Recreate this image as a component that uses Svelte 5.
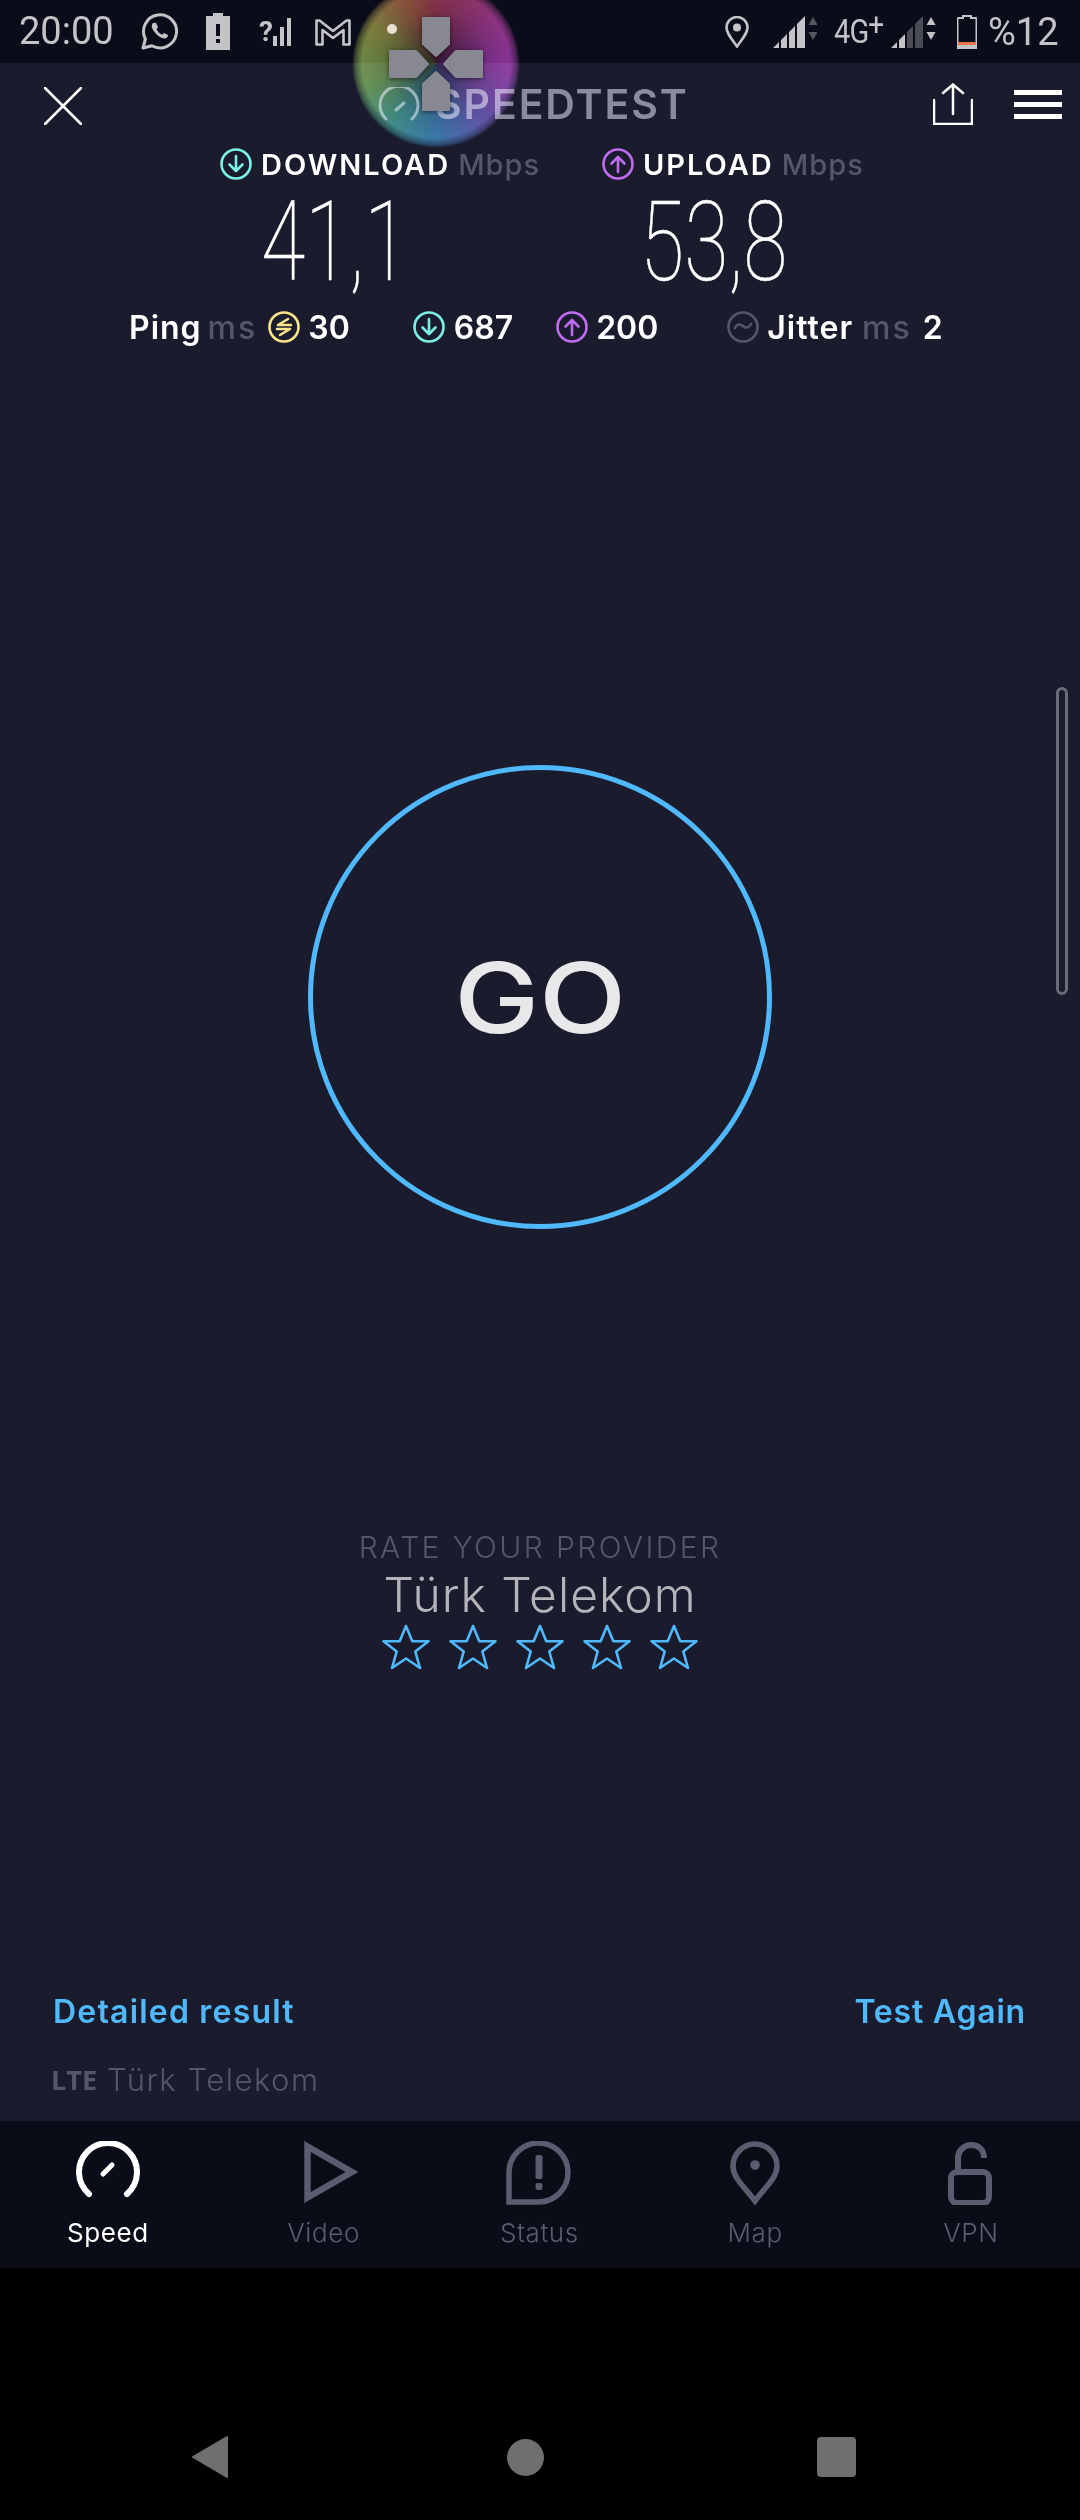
<script>
	const stars = [1, 2, 3, 4, 5];
	const tabs = [
		{ label: 'Speed', active: true },
		{ label: 'Video' },
		{ label: 'Status' },
		{ label: 'Map' },
		{ label: 'VPN' }
	];
</script>

<div class="phone">
	<div class="status">
		<div class="status-left">
			<span class="clock">20:00</span>
			<svg class="ic-wa" viewBox="0 0 37 37" width="37" height="37">
				<path d="M2 35l2.400-9A16.500 16.500 0 1 1 11 32.800z" fill="none" stroke="#c4c4c8" stroke-width="3" stroke-linejoin="round" />
				<path d="M12 10c-2 2-1.500 5 1.500 9s7 6.500 10 6.500c2.500 0 3.500-2 3.500-3.500l-4-2-1.800 1.800c-2.500-1-4.700-3.200-5.700-5.700l1.500-1.800-2-4.500z" fill="#c4c4c8" />
			</svg>
			<svg class="ic-bat" viewBox="0 0 24 37" width="24" height="37">
				<path d="M7 0h10v3h7v34H0V3h7z" fill="#c4c4c8" />
				<rect x="10" y="11" width="4" height="12" fill="#0a0c1a" />
				<rect x="10" y="26" width="4" height="4" fill="#0a0c1a" />
			</svg>
			<span class="qsig">
				<span class="q">?</span>
				<svg viewBox="0 0 20 28" width="20" height="28">
					<rect x="0" y="18" width="4" height="10" fill="#c4c4c8" />
					<rect x="7" y="9" width="4" height="19" fill="#c4c4c8" />
					<rect x="14" y="0" width="4" height="28" fill="#c4c4c8" />
				</svg>
			</span>
			<svg class="ic-m" viewBox="0 0 36 28" width="36" height="28">
				<path d="M1.500 26.500V2.500h3L18 13 31.500 2.500h3v24h-6V12L18 20 7.500 12v14.500z" fill="none" stroke="#c4c4c8" stroke-width="2.600" stroke-linejoin="round" />
			</svg>
		</div>
		<div class="status-right">
			<svg class="ic-loc" viewBox="0 0 24 32" width="24" height="32">
				<path d="M12 30.500C6 22 1.500 17 1.500 11.500a10.500 10.500 0 0 1 21 0C22.500 17 18 22 12 30.500z" fill="none" stroke="#c4c4c8" stroke-width="2.600" />
				<circle cx="12" cy="11.500" r="4" fill="#c4c4c8" />
			</svg>
			<svg class="ic-sig1" viewBox="0 0 44 32" width="44" height="32">
				<path d="M0 32L6 26V32zM8 24l6-6V32H8zM16 16l6-6V32h-6zM24 8l8-8V32h-8z" fill="#c4c4c8" />
				<path d="M40 1l4.500 8h-9z" fill="#55565f" />
				<path d="M40 24l4.500-8h-9z" fill="#55565f" />
			</svg>
			<span class="net">4G<sup>+</sup></span>
			<svg class="ic-sig2" viewBox="0 0 45 32" width="45" height="32">
				<path d="M0 32L6 26V32zM8 24l6-6V32H8z" fill="#c4c4c8" />
				<path d="M16 16l6-6V32h-6zM24 8l8-8V32h-8z" fill="#4a4b55" />
				<path d="M40 1l4.500 8h-9z" fill="#c4c4c8" />
				<path d="M40 24l4.500-8h-9z" fill="#c4c4c8" />
			</svg>
			<svg class="ic-batt" viewBox="0 0 20 34" width="20" height="34">
				<path d="M6 1h8v2h4.500a1 1 0 0 1 1 1v28.500a1 1 0 0 1-1 1h-17a1 1 0 0 1-1-1V4a1 1 0 0 1 1-1H6z" fill="none" stroke="#c4c4c8" stroke-width="2" />
				<rect x="1" y="27" width="18" height="3" fill="#e8734a" />
				<rect x="1" y="30" width="18" height="3.500" fill="#c4c4c8" />
			</svg>
			<span class="pct">%12</span>
		</div>
	</div>

	<main class="main">
		<header class="head">
			<svg class="ic-close" viewBox="0 0 38 38" width="38" height="38">
				<path d="M1 1l36 36M37 1L1 37" stroke="#fff" stroke-width="2.500" stroke-linecap="round" />
			</svg>
			<div class="brand">
				<svg viewBox="0 0 42 34" width="42" height="34">
					<path d="M8 32A19 19 0 1 1 34 32" fill="none" stroke="#8a8b9f" stroke-width="3" stroke-linecap="round" />
					<path d="M18 23l8-7" stroke="#8a8b9f" stroke-width="3" stroke-linecap="round" />
				</svg>
				<span>SPEEDTEST</span>
			</div>
			<div class="head-actions">
				<svg viewBox="0 0 40 42" width="40" height="42">
					<path d="M1 17V41H39V17" fill="none" stroke="#fff" stroke-width="2.500" stroke-linecap="round" />
					<path d="M20 2V31M10 10L20 1.500 30 10" fill="none" stroke="#fff" stroke-width="2.500" stroke-linecap="round" />
				</svg>
				<div class="burger"><i></i><i></i><i></i></div>
			</div>
		</header>

		<section class="speeds">
			<div class="speed dl">
				<div class="speed-label">
					<svg class="round" viewBox="0 0 32 32"><circle cx="16" cy="16" r="14.500" /><path d="M16 8v15M9.500 16.500L16 23l6.500-6.500" /></svg>
					<b>DOWNLOAD</b><em>Mbps</em>
				</div>
				<div class="value">41,1</div>
			</div>
			<div class="speed ul">
				<div class="speed-label">
					<svg class="round" viewBox="0 0 32 32"><circle cx="16" cy="16" r="14.500" /><path d="M16 24V9M9.500 15.500L16 9l6.500 6.500" /></svg>
					<b>UPLOAD</b><em>Mbps</em>
				</div>
				<div class="value">53,8</div>
			</div>
		</section>

		<section class="stats">
			<b class="s-ping">Ping</b><em class="s-ms">ms</em>
			<svg class="round ping" viewBox="0 0 32 32"><circle cx="16" cy="16" r="14.500" /><path d="M20 8L10 14H23M9 18H22L12 24" /></svg>
			<b class="s-30">30</b>
			<svg class="round dlc g1" viewBox="0 0 32 32"><circle cx="16" cy="16" r="14.500" /><path d="M16 8v15M9.500 16.500L16 23l6.500-6.500" /></svg>
			<b class="s-687">687</b>
			<svg class="round ulc g2" viewBox="0 0 32 32"><circle cx="16" cy="16" r="14.500" /><path d="M16 24V9M9.500 15.500L16 9l6.500 6.500" /></svg>
			<b class="s-200">200</b>
			<svg class="round jit" viewBox="0 0 32 32"><circle cx="16" cy="16" r="14.500" /><path d="M8 17c2-4 5-4.500 8-2s6 2 8-2" /></svg>
			<b class="s-jit">Jitter</b><em class="s-ms2">ms</em><b class="s-2">2</b>
		</section>

		<div class="go-wrap">
			<div class="go"><span>GO</span></div>
		</div>

		<section class="rate">
			<div class="rate-title">RATE YOUR PROVIDER</div>
			<div class="provider">Türk Telekom</div>
			<div class="stars">
				{#each stars as s (s)}
					<svg viewBox="0 0 48 46" width="48" height="46">
						<path d="M24 2l6.300 15.200H46.500L33.300 27.500 38 44 24 34.500 10 44l4.700-16.500L1.500 17.200H17.700z" fill="none" stroke="#50b8fc" stroke-width="2.600" stroke-linejoin="round" />
					</svg>
				{/each}
			</div>
		</section>

		<div class="links">
			<span>Detailed result</span>
			<span class="again">Test Again</span>
		</div>
		<div class="carrier"><b>LTE</b><span>Türk Telekom</span></div>

		<div class="scrollbar"></div>
	</main>

	<nav class="tabs">
		{#each tabs as tab (tab.label)}
			<div class="tab" class:active={tab.active}>
				<div class="tab-icon">
					{#if tab.label === 'Speed'}
						<svg viewBox="0 0 64 58" width="64" height="58">
							<path d="M13 53A29 29 0 1 1 51 53" fill="none" stroke="#fff" stroke-width="6" stroke-linecap="round" />
							<path d="M27 33l9-9" stroke="#fff" stroke-width="5" stroke-linecap="round" />
						</svg>
					{:else if tab.label === 'Video'}
						<svg class="shift-video" viewBox="0 0 54 62" width="54" height="62">
							<path d="M3.500 5.500V56.500L48 31z" fill="none" stroke="#5b5c6f" stroke-width="6.500" />
						</svg>
					{:else if tab.label === 'Status'}
						<svg viewBox="0 0 66 64" width="66" height="64">
							<path d="M3 61V32A29.500 29.500 0 1 1 33 61z" fill="none" stroke="#5b5c6f" stroke-width="5.500" />
							<rect x="29.500" y="14" width="7" height="24" rx="2" fill="#5b5c6f" />
							<rect x="29.500" y="42" width="7" height="7" rx="2" fill="#5b5c6f" />
						</svg>
					{:else if tab.label === 'Map'}
						<svg viewBox="0 0 50 64" width="50" height="64">
							<path d="M25 60C14 45 3 37 3 25a22 22 0 0 1 44 0C47 37 36 45 25 60z" fill="none" stroke="#5b5c6f" stroke-width="5.500" />
							<circle cx="25" cy="24" r="4.800" fill="#5b5c6f" />
						</svg>
					{:else}
						<svg viewBox="0 0 46 64" width="46" height="64">
							<path d="M10 31V17a13 13 0 0 1 13-13c8 0 13 5 13 13" fill="none" stroke="#5b5c6f" stroke-width="6" />
							<rect x="3" y="31" width="38" height="31" rx="6" fill="none" stroke="#5b5c6f" stroke-width="6" />
						</svg>
					{/if}
				</div>
				<span>{tab.label}</span>
			</div>
		{/each}
	</nav>

	<div class="sysnav">
		<svg viewBox="0 0 38 44" width="38" height="44"><path d="M36 2L2 22l34 20z" fill="#6f6f6f" stroke="#6f6f6f" stroke-width="2" stroke-linejoin="round" /></svg>
		<i class="sys-circle"></i>
		<i class="sys-square"></i>
	</div>

	<div class="overlay">
		<div class="glow"></div>
		<i class="dot"></i>
		<svg viewBox="0 0 96 96" width="96" height="96">
			<g fill="#888893" stroke="#888893" stroke-width="2" stroke-linejoin="round">
				<path d="M35 2H61V28L48 40 35 28z" />
				<path d="M35 94H61V68L48 56 35 68z" />
				<path d="M2 35V61H28L40 48 28 35z" />
				<path d="M94 35V61H68L56 48 68 35z" />
			</g>
		</svg>
	</div>
</div>

<style>
	:global(body) {
		background: #000;
	}

	.phone {
		position: relative;
		width: 1080px;
		height: 2520px;
		display: flex;
		flex-direction: column;
		overflow: hidden;
		font-family: Inter, 'Noto Sans', sans-serif;
		background: #000;
	}

	.status {
		height: 63px;
		flex: none;
		background: #0a0c1a;
		color: #c4c4c8;
		display: flex;
		justify-content: space-between;
		align-items: center;
		padding: 0 24px 0 19px;
		font-family: Roboto, sans-serif;
	}

	.status-left,
	.status-right {
		display: flex;
		align-items: center;
	}

	.clock {
		font-size: 38px;
		line-height: 63px;
		width: 122px;
	}

	.ic-bat {
		margin-left: 28px;
	}

	.qsig {
		display: flex;
		align-items: flex-end;
		margin-left: 29px;
	}

	.q {
		font-size: 28px;
		font-weight: 700;
		line-height: 28px;
		width: 15px;
	}

	.qsig svg {
		margin-left: -1px;
	}

	.ic-m {
		margin-left: 22px;
	}

	.ic-sig1 {
		margin-left: 24px;
	}

	.net {
		font-size: 33px;
		margin-left: 17px;
		width: 57px;
		white-space: nowrap;
		letter-spacing: -1px;
		transform: scaleX(0.88);
		transform-origin: left;
	}

	.net sup {
		font-size: 32px;
		line-height: 0;
		vertical-align: 8px;
	}

	.ic-batt {
		margin-left: 21px;
	}

	.pct {
		font-size: 38px;
		margin-left: 11px;
		width: 68px;
	}

	.main {
		position: relative;
		flex: 1;
		background: #1a1c2e;
		display: flex;
		flex-direction: column;
	}

	.head {
		display: flex;
		align-items: center;
		height: 82px;
		padding: 0 18px 0 44px;
	}

	.ic-close {
		margin-top: 4px;
	}

	.brand {
		display: flex;
		align-items: center;
		gap: 15px;
		margin-left: 296px;
		color: #8a8b9f;
		font-size: 41px;
		font-weight: 600;
		letter-spacing: 1.900px;
		line-height: 40px;
	}

	.head-actions {
		display: flex;
		align-items: center;
		gap: 41px;
		margin-left: auto;
	}

	.burger {
		width: 48px;
		display: flex;
		flex-direction: column;
		gap: 7px;
	}

	.burger i {
		height: 5px;
		background: #fff;
	}

	.round {
		width: 32px;
		height: 32px;
		flex: none;
		fill: none;
		stroke-width: 2.600;
		stroke-linecap: round;
		stroke-linejoin: round;
	}

	.dl .round,
	.dlc {
		stroke: #7af0e6;
	}

	.ul .round,
	.ulc {
		stroke: #c06cf0;
	}

	.ping {
		stroke: #fbe58a;
	}

	.jit {
		stroke: #55566a;
	}

	b {
		font-weight: 600;
		color: #fff;
	}

	em {
		font-style: normal;
		font-weight: 500;
		color: #55566a;
	}

	.speeds {
		display: flex;
		height: 164px;
		padding-left: 220px;
	}

	.speed {
		width: 382px;
	}

	.speed-label {
		display: flex;
		align-items: center;
		height: 38px;
		font-size: 29px;
		white-space: nowrap;
	}

	.speed-label b {
		margin-left: 9px;
		letter-spacing: 2px;
	}

	.speed-label em {
		margin-left: 8px;
		letter-spacing: 1px;
	}

	.value {
		color: #fff;
		font-family: Roboto, sans-serif;
		font-weight: 100;
		font-size: 112px;
		line-height: 90px;
		margin-top: 14px;
		margin-left: 41px;
		width: 134px;
		white-space: nowrap;
		transform: scaleX(0.72);
		transform-origin: left;
		-webkit-text-stroke: 0.5px #fff;
	}

	.ul .value {
		margin-left: 38px;
	}

	.stats {
		display: flex;
		align-items: center;
		height: 36px;
		padding-left: 129px;
		font-size: 32px;
		white-space: nowrap;
	}

	.s-ping {
		letter-spacing: 1px;
	}

	.s-ms {
		margin-left: 6px;
		letter-spacing: 2px;
	}

	.ping {
		margin-left: 11px;
	}

	.s-30 {
		margin-left: 8px;
	}

	.g1 {
		margin-left: 63px;
	}

	.s-687 {
		margin-left: 9px;
	}

	.g2 {
		margin-left: 43px;
	}

	.s-200 {
		margin-left: 8px;
	}

	.jit {
		margin-left: 69px;
	}

	.s-jit {
		margin-left: 8px;
		letter-spacing: 1px;
	}

	.s-ms2 {
		margin-left: 9px;
		letter-spacing: 2px;
	}

	.s-2 {
		margin-left: 11px;
	}

	.go-wrap {
		display: flex;
		justify-content: center;
		margin-top: 420px;
	}

	.go {
		width: 464px;
		height: 464px;
		box-sizing: border-box;
		border: 5px solid #50b8fc;
		border-radius: 50%;
		display: flex;
		align-items: center;
		justify-content: center;
		color: #e8e8ea;
		font-size: 98px;
		font-weight: 500;
	}

	.go span {
		transform: scaleX(1.16);
	}

	.rate {
		margin-top: 300px;
		text-align: center;
	}

	.rate-title {
		color: #55566a;
		font-size: 30px;
		font-weight: 300;
		line-height: 36px;
		letter-spacing: 2.400px;
	}

	.provider {
		color: #b4b4ba;
		font-size: 48px;
		font-weight: 300;
		line-height: 56px;
		letter-spacing: 1px;
		margin-top: 2px;
	}

	.stars {
		display: flex;
		justify-content: center;
		gap: 19px;
		margin-top: 1px;
	}

	.links {
		display: flex;
		justify-content: space-between;
		padding: 0 54px 0 53px;
		margin-top: 322px;
		color: #50b8fc;
		font-size: 32px;
		font-weight: 600;
		line-height: 40px;
		letter-spacing: 1.200px;
	}

	.again {
		letter-spacing: 0.800px;
	}

	.carrier {
		display: flex;
		align-items: center;
		gap: 10px;
		padding-left: 51px;
		margin-top: 28px;
		font-size: 31px;
		font-weight: 300;
		color: #55566a;
		line-height: 40px;
		letter-spacing: 1.500px;
	}

	.carrier b {
		color: #55566a;
		font-weight: 700;
		font-size: 27px;
		letter-spacing: 0;
		font-family: 'Open Sans', sans-serif;
	}

	.scrollbar {
		position: absolute;
		left: 1056px;
		top: 624px;
		width: 12px;
		height: 308px;
		box-sizing: border-box;
		border: 3px solid #6a6b78;
		border-radius: 6px;
	}

	.tabs {
		height: 147px;
		flex: none;
		display: flex;
		background: #0a0c18;
	}

	.tab {
		width: 215.750px;
		display: flex;
		flex-direction: column;
		align-items: center;
		color: #5b5c6f;
		font-size: 26px;
		font-weight: 300;
		letter-spacing: 0.600px;
	}

	.tab.active {
		color: #fff;
		font-weight: 400;
	}

	.tab-icon {
		height: 66px;
		margin-top: 20px;
		display: flex;
		align-items: flex-start;
	}

	.shift-video {
		margin-left: 14px;
	}

	.tab span {
		margin-top: 11px;
		line-height: 30px;
	}

	.sysnav {
		height: 252px;
		flex: none;
		box-sizing: border-box;
		background: #000;
		display: flex;
		align-items: center;
		padding: 126px 0 0 191px;
	}

	.sysnav svg {
		margin-right: 278px;
	}

	.sys-circle {
		width: 37px;
		height: 37px;
		border-radius: 50%;
		background: #6f6f6f;
	}

	.sys-square {
		width: 39px;
		height: 40px;
		border-radius: 4px;
		background: #6f6f6f;
		margin-left: 273px;
	}

	.overlay {
		position: absolute;
		left: 352px;
		top: -20px;
		width: 168px;
		height: 168px;
		display: flex;
		align-items: center;
		justify-content: center;
	}

	.glow {
		position: absolute;
		inset: 0;
		border-radius: 50%;
		mix-blend-mode: screen;
		background:
			radial-gradient(circle, rgba(0, 0, 0, 0.7) 0, rgba(0, 0, 0, 0.15) 45%, transparent 65%),
			conic-gradient(#8a2a38, #8a2a70 50deg, #842a92 95deg, #553c95 135deg, #24689a 180deg, #2a8070 215deg, #5c8a30 255deg, #7a7a28 300deg, #8a4a28 335deg, #8a2a38);
		-webkit-mask: radial-gradient(circle closest-side, #000 88%, rgba(0, 0, 0, 0.5) 96%, transparent 100%);
		mask: radial-gradient(circle closest-side, #000 88%, rgba(0, 0, 0, 0.5) 96%, transparent 100%);
	}

	.overlay svg {
		position: relative;
		filter: drop-shadow(0 1px 2px rgba(0, 0, 0, 0.5));
	}

	.dot {
		position: absolute;
		left: 35px;
		top: 44px;
		width: 10px;
		height: 10px;
		border-radius: 50%;
		background: #e8e0d0;
	}
</style>
